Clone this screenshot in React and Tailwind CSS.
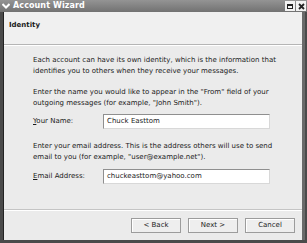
import React from "react";

const Field = ({ label, accel, value }) => (
    <div className="flex items-center h-[15px]">
        <label className="w-[70px] shrink-0">
            <span className="underline">{accel}</span>
            {label}
        </label>
        <div className="w-[167px] h-[15px] bg-white border border-[#8f8f8f] border-r-[#d8d8d8] border-b-[#d8d8d8] px-[3px] leading-[13px]">
            {value}
        </div>
    </div>
);

const Button = ({ children }) => (
    <button className="w-[50px] h-[15px] border border-[#9c9c9c] bg-[#eeeeee] text-[#222] leading-[13px] shadow-[inset_1px_1px_0_#fff]">
        {children}
    </button>
);

const App = () => {
    return (
        <div
            className="w-[307px] h-[243px] flex flex-col bg-[#4a4a4a] overflow-hidden text-[7px] text-[#1a1a1a]"
            style={{ fontFamily: '"DejaVu Sans", sans-serif' }}
        >
            {/* title bar */}
            <div className="h-[12px] flex items-center bg-gradient-to-b from-[#949494] to-[#727272] text-white">
                <div className="w-[10px] h-[10px] ml-[1px] flex items-center justify-center">
                    <svg width="8" height="6" viewBox="0 0 8 6">
                        <path d="M0.5 1 L4 4.5 L7.5 1" stroke="#fff" strokeWidth="2" fill="none" />
                    </svg>
                </div>
                <span className="ml-[2px] font-bold text-[8px] tracking-[0.1px]">Account Wizard</span>
                <div className="ml-auto flex gap-[1px] mr-[1px]">
                    <div className="w-[10px] h-[10px] bg-[#f2f2f2] flex items-center justify-center">
                        <div className="w-[6px] h-[5px] border border-[#222] border-t-2" />
                    </div>
                    <div className="w-[10px] h-[10px] bg-[#f2f2f2] flex items-center justify-center">
                        <svg width="7" height="7" viewBox="0 0 7 7">
                            <path d="M1 1 L6 6 M6 1 L1 6" stroke="#222" strokeWidth="1.8" />
                        </svg>
                    </div>
                </div>
            </div>

            {/* window body */}
            <div className="flex-1 flex flex-col ml-[3px] mr-[2px] mb-[3px] border-l border-[#222] bg-[#ebebeb] border-r-[3px] border-r-[#6a6a6a]">
                <div className="h-[33px] bg-[#f0f0f0] pl-[5px] pt-[8px] font-bold border-b border-[#b5b5b5]">
                    Identity
                </div>
                <div className="h-px bg-white" />
                <div className="flex-1 flex flex-col pl-[29px] pt-[9px] leading-[11px]">
                    <p>
                        Each account can have its own identity, which is the information that
                        <br />
                        identifies you to others when they receive your messages.
                    </p>
                    <p className="mt-[10px]">
                        Enter the name you would like to appear in the "From" field of your
                        <br />
                        outgoing messages (for example, "John Smith").
                    </p>
                    <div className="mt-[5px]">
                        <Field accel="Y" label="our Name:" value="Chuck Easttom" />
                    </div>
                    <p className="mt-[12px]">
                        Enter your email address. This is the address others will use to send
                        <br />
                        email to you (for example, "user@example.net").
                    </p>
                    <div className="mt-[6px]">
                        <Field accel="E" label="mail Address:" value="chuckeasttom@yahoo.com" />
                    </div>
                </div>
                <div className="h-px bg-[#c4c4c4]" />
                <div className="h-px bg-white" />
                <div className="h-[29px] flex items-center justify-end gap-[7px] pr-[7px]">
                    <Button>&lt; Back</Button>
                    <Button>Next &gt;</Button>
                    <Button>Cancel</Button>
                </div>
            </div>
        </div>
    );
};

export default App;
